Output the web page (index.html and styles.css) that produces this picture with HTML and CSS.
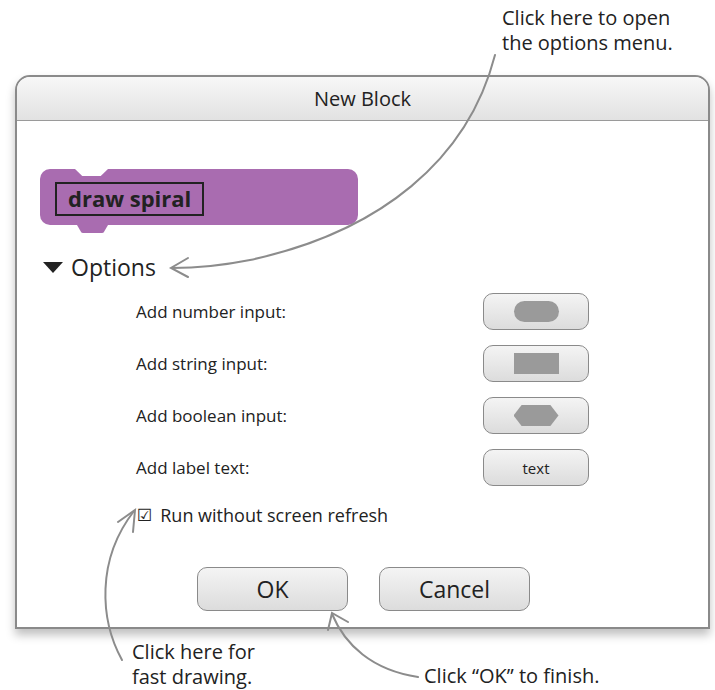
FILE: index.html
```html
<!DOCTYPE html>
<html lang="en">
<head>
  <meta charset="UTF-8" />
  <title>New Block</title>
  <link rel="stylesheet" href="styles.css">
</head>
<body>
  <div class="page">

    <div class="note-top">Click here to open<br>the options menu.</div>

    <div class="dialog">
      <div class="titlebar">New Block</div>

      <div class="dialog-body">
        <div class="block">
          <span class="block-label">draw spiral</span>
        </div>

        <div class="options-head"><span class="triangle"></span>Options</div>

        <div class="option-list">
          <div class="option-row">
            <span class="option-label">Add number input:</span>
            <button class="slot-btn"><span class="shape pill"></span></button>
          </div>
          <div class="option-row">
            <span class="option-label">Add string input:</span>
            <button class="slot-btn"><span class="shape rect"></span></button>
          </div>
          <div class="option-row">
            <span class="option-label">Add boolean input:</span>
            <button class="slot-btn"><span class="shape hex"></span></button>
          </div>
          <div class="option-row">
            <span class="option-label">Add label text:</span>
            <button class="slot-btn text-btn">text</button>
          </div>
        </div>

        <div class="check-row"><span class="check">&#9745;</span>Run without screen refresh</div>

        <div class="actions">
          <button class="big-btn">OK</button>
          <button class="big-btn">Cancel</button>
        </div>
      </div>
    </div>

    <div class="notes-bottom">
      <div class="note-fast">Click here for<br>fast drawing.</div>
      <div class="note-ok">Click “OK” to finish.</div>
    </div>

    <!-- callout arrows -->
    <svg class="arrows" width="715" height="690" viewBox="0 0 715 690">
      <g fill="none" stroke="#8c8c8c" stroke-width="2" stroke-linecap="round">
        <path d="M495 55 C 468 160, 380 232, 250 260 Q 210 268 172 268" />
        <path d="M188 258 L171 268 L188 277" />
        <path d="M122 660 C 100 620, 96 560, 134 511" />
        <path d="M118 522 L135 510 L133 532" />
        <path d="M418 677 C 372 670, 345 645, 332 614" />
        <path d="M328 630 L332 613 L348 622" />
      </g>
    </svg>
  </div>
</body>
</html>
```

FILE: styles.css
```css
body {
  margin: 0;
  font-family: 'Open Sans', 'Liberation Sans', sans-serif;
  color: #222;
  background: #fff;
}

.page {
  position: relative;
  width: 715px;
  height: 690px;
  overflow: hidden;
}

.note-top {
  height: 70px;
  padding-top: 5px;
  padding-left: 502px;
  font-size: 20px;
  line-height: 25px;
  white-space: nowrap;
}

.dialog {
  margin-left: 15px;
  width: 691px;
  border: 2px solid #8a8a8a;
  border-radius: 15px 15px 0 0;
  box-shadow: 0 6px 10px rgba(0, 0, 0, 0.25);
  background: #fff;
}

.titlebar {
  height: 43px;
  line-height: 43px;
  text-align: center;
  font-size: 20px;
  border-bottom: 1px solid #9a9a9a;
  border-radius: 13px 13px 0 0;
  background: linear-gradient(#f7f7f7, #e2e2e2);
}

.dialog-body {
  padding: 48px 0 16px 23px;
}

/* the purple block */
.block {
  position: relative;
  width: 318px;
  height: 56px;
  background: #a96cb0;
  border-radius: 10px;
  box-sizing: border-box;
  padding: 13px 0 0 15px;
}

.block::before {
  content: '';
  position: absolute;
  top: 0;
  left: 35px;
  width: 33px;
  height: 7px;
  background: #fff;
  clip-path: polygon(0 0, 100% 0, 78% 100%, 22% 100%);
}

.block::after {
  content: '';
  position: absolute;
  bottom: -8px;
  left: 37px;
  width: 31px;
  height: 8px;
  background: #a96cb0;
  border-radius: 0 0 6px 6px;
  clip-path: polygon(0 0, 100% 0, 85% 100%, 15% 100%);
}

.block-label {
  display: inline-block;
  border: 2px solid #222;
  padding: 0 11px;
  height: 30px;
  line-height: 29px;
  font-size: 22px;
  font-weight: bold;
  color: #222;
}

.options-head {
  display: flex;
  align-items: center;
  height: 30px;
  margin-top: 27px;
  font-size: 23px;
}

.triangle {
  width: 0;
  height: 0;
  border-left: 10px solid transparent;
  border-right: 10px solid transparent;
  border-top: 11px solid #222;
  margin: 0 8px 0 3px;
}

.option-list {
  display: flex;
  flex-direction: column;
  gap: 15px;
  margin-top: 11px;
  margin-left: 96px;
  width: 453px;
}

.option-row {
  display: flex;
  align-items: center;
  justify-content: space-between;
  font-size: 17px;
}

.slot-btn {
  display: flex;
  align-items: center;
  justify-content: center;
  width: 106px;
  height: 37px;
  border: 1px solid #8a8a8a;
  border-radius: 10px;
  background: linear-gradient(#f4f4f4, #dcdcdc);
  padding: 0;
  font-family: 'Open Sans', sans-serif;
  font-size: 15px;
  color: #222;
}

.shape {
  display: block;
  width: 45px;
  height: 21px;
  background: #9a9a9a;
}

.pill {
  border-radius: 11px;
}

.hex {
  clip-path: polygon(18% 0, 82% 0, 100% 50%, 82% 100%, 18% 100%, 0 50%);
}

.check-row {
  display: flex;
  align-items: center;
  height: 24px;
  margin-top: 17px;
  margin-left: 96px;
  font-size: 18px;
}

.check {
  font-family: 'DejaVu Sans', sans-serif;
  font-size: 17px;
  margin: 0 8px 0 1px;
}

.actions {
  display: flex;
  gap: 31px;
  margin-top: 40px;
  margin-left: 157px;
}

.big-btn {
  width: 151px;
  height: 44px;
  border: 1px solid #8a8a8a;
  border-radius: 10px;
  background: linear-gradient(#f4f4f4, #dcdcdc);
  font-family: 'Open Sans', sans-serif;
  font-size: 23px;
  color: #222;
}

.notes-bottom {
  display: flex;
  font-size: 20px;
  line-height: 25px;
  margin-top: 10px;
  white-space: nowrap;
}

.note-fast {
  margin-left: 132px;
}

.note-ok {
  margin-left: 169px;
  margin-top: 24px;
}

.arrows {
  position: absolute;
  top: 0;
  left: 0;
  pointer-events: none;
}
```
